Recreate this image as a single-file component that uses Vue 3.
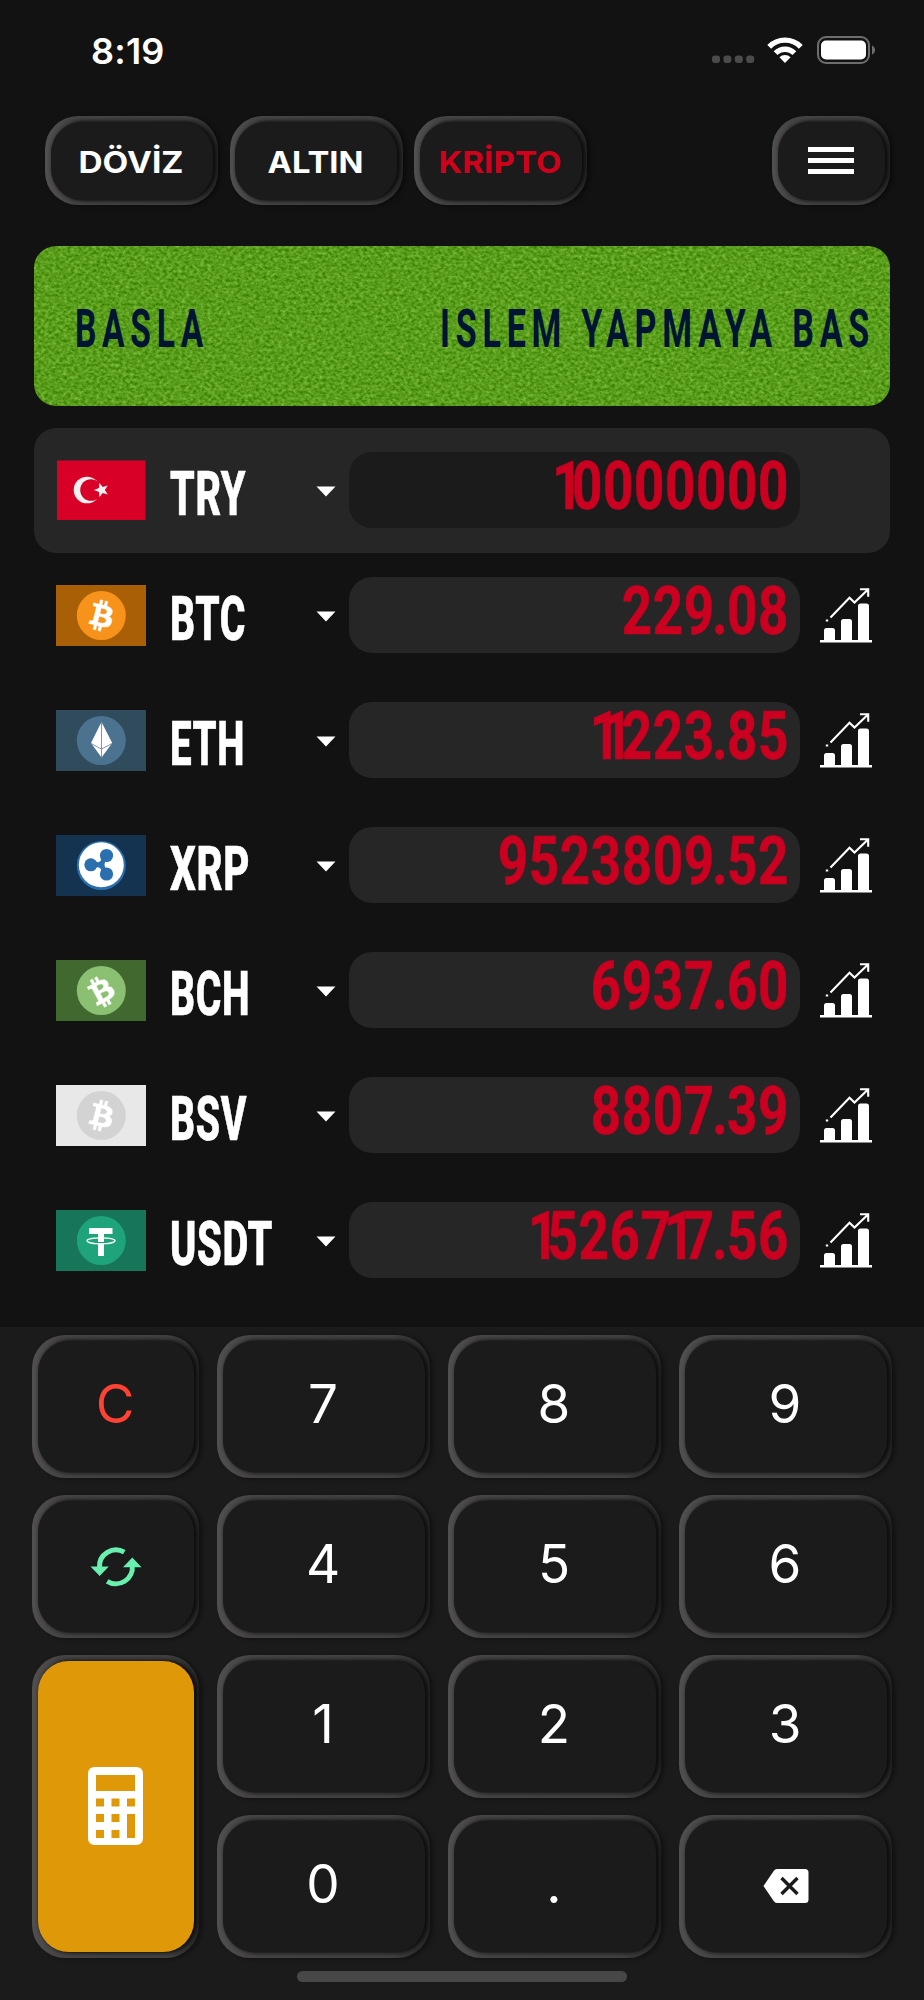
<script setup>
const tabs = [
  { label: 'DÖVİZ', width: 105, active: false },
  { label: 'ALTIN', width: 96, active: false },
  { label: 'KRİPTO', width: 123, active: true },
]

const rows = [
  { code: 'TRY', width: 76, value: '10000000', flag: 'try', selected: true },
  { code: 'BTC', width: 76, value: '229.08', flag: 'btc', bg: '#a85f05', disc: '#f7931a' },
  { code: 'ETH', width: 75, value: '11223.85', flag: 'eth', bg: '#2f4b5c', disc: '#4b7390' },
  { code: 'XRP', width: 80, value: '9523809.52', flag: 'xrp', bg: '#143350', disc: '#2a6fae' },
  { code: 'BCH', width: 80, value: '6937.60', flag: 'bch', bg: '#41692f', disc: '#8bc073' },
  { code: 'BSV', width: 77, value: '8807.39', flag: 'bsv', bg: '#e8e8e8', disc: '#d3d3d3' },
  { code: 'USDT', width: 103, value: '1526717.56', flag: 'usdt', bg: '#17755a', disc: '#1ea37a' },
]

const keys = ['C', '7', '8', '9', 'swap', '4', '5', '6', 'calc', '1', '2', '3', '0', '.', 'back']

const coin = 'M23.189 14.02c.314-2.096-1.283-3.223-3.465-3.975l.708-2.84-1.728-.43-.69 2.765c-.454-.114-.92-.22-1.385-.326l.695-2.783L15.596 6l-.708 2.839c-.376-.086-.746-.17-1.104-.26l.002-.009-2.384-.595-.46 1.846s1.283.294 1.256.312c.7.175.826.638.805 1.006l-.806 3.235c.048.012.11.03.18.057l-.183-.045-1.13 4.532c-.086.212-.303.531-.793.41.018.025-1.256-.313-1.256-.313l-.858 1.978 2.25.561c.418.105.828.215 1.231.318l-.715 2.872 1.727.43.708-2.84c.472.127.93.245 1.378.357l-.706 2.828 1.728.43.715-2.866c2.948.558 5.164.333 6.097-2.333.752-2.146-.037-3.385-1.588-4.192 1.13-.26 1.98-1.003 2.207-2.538zm-3.95 5.538c-.533 2.147-4.148.986-5.32.695l.95-3.805c1.172.293 4.929.872 4.37 3.11zm.535-5.569c-.487 1.953-3.495.96-4.47.717l.86-3.45c.975.243 4.118.696 3.61 2.733z'

// Display digits share one pitch; "1" and the decimal point take narrow cells.
const SQUEEZE = 0.79
function glyphPositions(value) {
  const cell = (c) => (c === '1' || c === '.' ? 12.2 : 31)
  const shift = (c) => (c === '1' ? -7.5 : c === '.' ? -2.5 : 0)
  let x = 440 - [...value].reduce((sum, c) => sum + cell(c), 0)
  return [...value]
    .map((c) => {
      const at = (x + shift(c)) / SQUEEZE
      x += cell(c)
      return at.toFixed(1)
    })
    .join(' ')
}
</script>

<template>
  <div class="screen">
    <header class="status">
      <span class="time">8:19</span>
      <svg class="signals" width="168" height="32" viewBox="0 0 168 32">
        <g fill="#4b4b4b">
          <rect v-for="n in 4" :key="n" :x="n * 11.4 - 8.4" y="21.5" width="8" height="7.5" rx="3" />
        </g>
        <g fill="none" stroke="#fff" stroke-width="5.4">
          <path d="M60.2 12.8a22 22 0 0 1 31.6 0" />
          <path d="M66.6 19.2a13.3 13.3 0 0 1 18.8 0" />
        </g>
        <path d="M76 29l-5.6-5.8a8 8 0 0 1 11.2 0z" fill="#fff" />
        <rect x="109" y="3" width="51" height="26" rx="8" fill="none" stroke="#6e6e6e" stroke-width="2" />
        <rect x="112" y="6.5" width="45" height="19" rx="5" fill="#fff" />
        <path d="M163 11.5q3 1.5 3 4.500t-3 4.500z" fill="#6e6e6e" />
      </svg>
    </header>

    <nav class="tabs">
      <button v-for="t in tabs" :key="t.label" class="bevel tab" :class="{ active: t.active }">
        <span class="face">
          <svg :width="t.width" height="40">
            <text x="-0.500" y="32" :textLength="t.width" lengthAdjust="spacingAndGlyphs">{{ t.label }}</text>
          </svg>
        </span>
      </button>
      <button class="bevel tab menu">
        <span class="face">
          <svg width="46" height="28" viewBox="0 0 46 28" fill="#fff">
            <rect y="0" width="46" height="5" /><rect y="11" width="46" height="5" /><rect y="22" width="46" height="5" />
          </svg>
        </span>
      </button>
    </nav>

    <section class="banner">
      <svg width="856" height="160">
        <filter id="grass" x="0" y="0" width="100%" height="100%" color-interpolation-filters="sRGB">
          <feTurbulence type="fractalNoise" baseFrequency="0.27 0.33" numOctaves="3" seed="7" />
          <feColorMatrix values=".44 0 0 0 .13  .36 0 0 0 .435  .4 0 0 0 -.09  0 0 0 0 1" />
          <feComposite in2="SourceAlpha" operator="in" />
        </filter>
        <rect width="856" height="160" rx="22" fill="#579b18" filter="url(#grass)" />
        <text x="41" y="100.500" textLength="134" lengthAdjust="spacingAndGlyphs">BASLA</text>
        <text x="406" y="100.500" textLength="435" lengthAdjust="spacingAndGlyphs">ISLEM YAPMAYA BAS</text>
      </svg>
    </section>

    <section class="rates">
      <div v-for="r in rows" :key="r.code" class="rate" :class="{ selected: r.selected }">
        <svg class="flag" width="90" height="61" viewBox="0 0 90 61">
          <template v-if="r.flag === 'try'">
            <rect x="1" y="0.500" width="88.500" height="59.500" fill="#d80027" />
            <circle cx="31" cy="30" r="13.300" fill="#f0f0f0" />
            <circle cx="35" cy="30" r="10.800" fill="#d80027" />
            <path fill="#f0f0f0" d="M38 30l5-2 .3-5.200 3.400 4.200 5.100-1.500-3 4.500 3 4.500-5.100-1.500-3.400 4.200-.3-5.200z" />
          </template>
          <template v-else>
            <rect width="90" height="61" :fill="r.bg" />
            <circle cx="45.300" cy="30.500" r="24.500" :fill="r.disc" />
            <path v-if="r.flag === 'btc' || r.flag === 'bsv'" :d="coin" fill="#fff" stroke="#fff" stroke-width=".25" transform="translate(45.300 30.500) scale(1.58) translate(-16.200 -16)" />
            <path v-if="r.flag === 'bch'" :d="coin" fill="#fff" stroke="#fff" stroke-width=".25" transform="translate(45.300 31.500) rotate(-42) scale(1.58) translate(-16.200 -16)" />
            <g v-if="r.flag === 'eth'">
              <path d="M45.500 12l10.700 21-10.700 14.500L35 33z" fill="#fff" />
              <path d="M45.500 12v35.500M35 33.500l10.500 5.500 10.700-5.500" fill="none" stroke="#6d8ba1" stroke-width=".9" />
            </g>
            <g v-if="r.flag === 'xrp'" :fill="r.disc">
              <circle cx="45.300" cy="29.800" r="22.500" fill="#fff" />
              <circle cx="34.800" cy="29.800" r="6.500" />
              <circle cx="50.500" cy="20.500" r="6.600" />
              <circle cx="50.500" cy="39" r="6.600" />
              <path d="M39 26q2 1.600 4 1 2-.5 2.500-3.500l4 3q-2 3 0 6.500l-4 3q-.5-3-2.500-3.500-2-.6-4 1z" />
            </g>
            <g v-if="r.flag === 'usdt'">
              <path d="M33 18h23.500v6H48v8h-6v-8h-9zM42 33.500h6V46h-6z" fill="#fff" />
              <ellipse cx="45" cy="30.800" rx="14" ry="3" fill="none" stroke="#fff" stroke-width="1.300" />
            </g>
          </template>
        </svg>
        <svg class="code" width="147" height="60">
          <text x="0" y="54" :textLength="r.width" lengthAdjust="spacingAndGlyphs">{{ r.code }}</text>
        </svg>
        <svg class="caret" width="20" height="11" viewBox="0 0 20 11"><path d="M.500.500h19L10 10.500z" fill="#fff" /></svg>
        <div class="field">
          <svg width="451" height="76">
            <text :transform="`scale(${SQUEEZE} 1)`" :x="glyphPositions(r.value)" y="57">{{ r.value }}</text>
          </svg>
        </div>
        <svg v-if="!r.selected" class="chart" width="52" height="56" viewBox="0 0 52 56">
          <path d="M0 53.300h52" stroke="#fff" stroke-width="2.400" />
          <path d="M4 53V42.500q0-2.500 2.500-2.500h6q2.500 0 2.500 2.500V53zM21 53V33.500q0-2.500 2.500-2.500h6q2.500 0 2.500 2.500V53zM38 53V18q0-2.500 2.500-2.500h6Q49 15.500 49 18v35z" fill="#fff" />
          <path d="M10.500 29.500L29.500 9.800l5 4.700L48 1.500M40 1.300h8.200v7.500M5.800 32.500h2.400" fill="none" stroke="#fff" stroke-width="2.100" />
        </svg>
      </div>
    </section>

    <section class="pad">
      <div class="keys">
        <button v-for="k in keys" :key="k" class="bevel key" :class="{ tall: k === 'calc', clear: k === 'C' }">
          <span class="face">
            <svg v-if="k === 'swap'" class="icon" width="52" height="40" viewBox="0 0 52 40">
              <g fill="none" stroke="#69f0ae" stroke-width="5">
                <path d="M34.300 5.200A16.500 16.500 0 0 0 9.500 20.500" />
                <path d="M17.200 34.300A16.500 16.500 0 0 0 42.300 18.500" />
              </g>
              <path d="M.500 19.500h18.300L9.700 29zM51.500 20.300H33L42.300 10.500z" fill="#69f0ae" />
            </svg>
            <svg v-else-if="k === 'calc'" width="55" height="78" viewBox="0 0 55 78">
              <path fill="#fff" fill-rule="evenodd" d="M7 0h41q7 0 7 7v64q0 7-7 7H7q-7 0-7-7V7q0-7 7-7zM8 8v16h39V8zM8 31.500v8h8v-8zM23.500 31.500v8h8v-8zM39 31.500v8h8v-8zM8 47v8h8v-8zM23.500 47v8h8v-8zM39 47v24h8V47zM8 63v8h8v-8zM23.500 63v8h8v-8z" />
            </svg>
            <svg v-else-if="k === 'back'" width="46" height="34" viewBox="0 0 46 34">
              <path d="M14 0h28q3.500 0 3.500 3.500v27q0 3.500-3.500 3.500H14q-2 0-3.300-2L.500 17 10.700 2Q12 0 14 0z" fill="#fff" />
              <path d="M18.500 9l16 16M34.500 9l-16 16" stroke="#1b1b1b" stroke-width="3.400" />
            </svg>
            <span v-else class="glyph">{{ k }}</span>
          </span>
        </button>
      </div>
      <div class="home"></div>
    </section>
  </div>
</template>

<style>
html, body { background: #111; }
</style>

<style scoped>
.screen {
  width: 924px;
  height: 2000px;
  overflow: hidden;
  box-sizing: border-box;
  display: flex;
  flex-direction: column;
  background: #121212;
  color: #fff;
  font-family: Inter, "Liberation Sans", sans-serif;
}
svg { display: block; overflow: visible; }
button { border: 0; margin: 0; font: inherit; color: inherit; }

.status {
  height: 116px;
  box-sizing: border-box;
  padding: 29px 47px 0 91px;
  display: flex;
  justify-content: space-between;
  align-items: flex-start;
}
.time { font-size: 36px; line-height: 44px; font-weight: 600; letter-spacing: 0.2px; }
.signals { margin-top: 5px; }

.bevel {
  padding: 5.5px;
  border-radius: 33px;
  background: linear-gradient(to right, #524f4f, #454343 16%, #404040 82%, #282828);
  box-shadow: 3px 1px 4px rgba(0, 0, 0, .4);
  overflow: hidden;
  display: flex;
}
.face {
  flex: 1;
  display: flex;
  align-items: center;
  justify-content: center;
  border-radius: 31px;
  background: #1b1b1b;
  box-shadow: 3px 0 4px #0c0c0c, 1px 0 4px rgba(20, 20, 20, .7);
}

.tabs { display: flex; gap: 11.500px; padding: 0 34px 0 45px; height: 89px; }
.tab { width: 173px; height: 89px; }
.tab text { font-size: 30.500px; font-weight: 700; fill: #fff; }
.tab.active text { fill: #d0021b; }
.menu { width: 118px; margin-left: auto; }

.banner { margin: 41px 34px 0; height: 160px; }
.banner text {
  font-family: Roboto, sans-serif;
  font-weight: 700;
  font-size: 53px;
  letter-spacing: 9px;
  fill: #001433;
}

.rates { margin: 22px 34px 0; height: 898.500px; }
.rate {
  height: 125px;
  box-sizing: border-box;
  padding: 0 18px 0 22px;
  display: flex;
  align-items: flex-start;
  border-radius: 22px;
}
.rate.selected { background: #262626; }
.flag { margin-top: 32px; }
.code { margin: 33px 0 0 24px; }
.code text {
  font-family: Roboto, sans-serif;
  font-weight: 800;
  font-size: 61.500px;
  letter-spacing: 1px;
  fill: #fff;
  stroke: #fff;
  stroke-width: 0.7px;
}
.caret { margin-top: 58px; margin-left: -1px; }
.field {
  width: 451px;
  height: 76px;
  margin: 24px 0 0 13px;
  border-radius: 23px;
  background: #262626;
}
.selected .field { background: #1b1b1b; }
.field text { font-family: Roboto, sans-serif; font-weight: 700; font-size: 67px; fill: #cb0020; stroke: #cb0020; stroke-width: 0.6px; }
.chart { margin: 35px 0 0 19.500px; }

.pad {
  flex: 1;
  background: #1b1b1b;
  padding: 8.500px 32px 0;
  display: flex;
  flex-direction: column;
}
.keys {
  display: grid;
  grid-template-columns: 167px 213px 213px 213px;
  grid-auto-rows: 142.500px;
  gap: 17.500px 18px;
}
.key.tall { grid-row: span 2; }
.tall .face { background: #df9807; }
.glyph { font-size: 53px; line-height: 60px; margin: -5px 1px 0 0; }
.clear .glyph { color: #ff4234; }
.icon { margin-top: 1px; }
.home {
  width: 330px;
  height: 11px;
  margin: 13px auto 0;
  border-radius: 5.500px;
  background: #474747;
}
</style>
